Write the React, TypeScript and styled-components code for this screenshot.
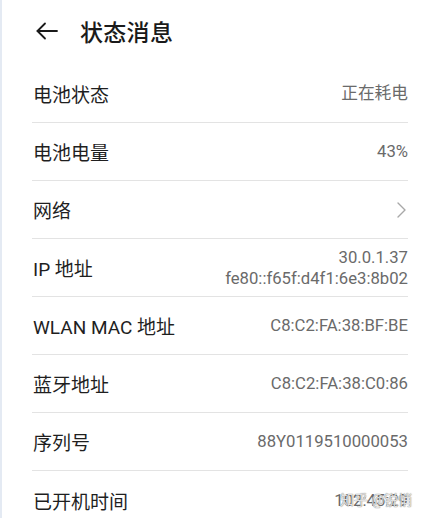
import React from 'react';
import styled, { createGlobalStyle } from 'styled-components';

const GlobalStyle = createGlobalStyle`
	html, body {
		margin: 0;
		padding: 0;
		background: #ffffff;
	}

	body {
		font-family: Roboto, "Noto Sans CJK SC", sans-serif;
		-webkit-font-smoothing: antialiased;
	}
`;

const Screen = styled.div`
	position: relative;
	width: 434px;
	height: 518px;
	overflow: hidden;
	box-sizing: border-box;
	border-left: 2px solid #e4eaf3;
	background: #ffffff;
`;

const Header = styled.header`
	display: flex;
	align-items: center;
	gap: 21px;
	height: 65px;
	padding: 0 0 4px 33px;
	box-sizing: border-box;
`;

const BackButton = styled.button`
	display: flex;
	align-items: center;
	justify-content: center;
	width: 24px;
	height: 24px;
	padding: 0;
	border: 0;
	background: none;
	color: #1a1a1a;
	cursor: pointer;
`;

const Title = styled.h1`
	margin: 0;
	font-size: 23px;
	font-weight: 500;
	color: #1a1a1a;
	letter-spacing: 0.3px;
`;

const List = styled.ul`
	list-style: none;
	margin: 0;
	padding: 0 26px 0 30px;
`;

const Row = styled.li<{ $last?: boolean }>`
	display: flex;
	align-items: center;
	justify-content: space-between;
	height: 58px;
	box-sizing: border-box;
	border-bottom: ${p => (p.$last ? 'none' : '1px solid #e3e3e3')};
	padding: 0 0 0 1px;
`;

const Label = styled.span`
	font-size: 19px;
	color: #1f1f1f;
`;

const Value = styled.span`
	display: flex;
	flex-direction: column;
	align-items: flex-end;
	font-size: 16.7px;
	line-height: 21px;
	color: #6a6a6a;
`;

const Chevron = styled.svg`
	width: 12px;
	height: 18px;
	margin-right: 1px;
`;

const Watermark = styled.span`
	position: absolute;
	right: 22px;
	bottom: 9px;
	font-size: 14px;
	color: rgba(240, 240, 240, 0.9);
	text-shadow: 0 0 1px rgba(110, 110, 110, 0.9), 0 0 1px rgba(110, 110, 110, 0.6);
	pointer-events: none;
`;

type Item = {
	label: string;
	value?: string[];
	link?: boolean;
};

const items: Item[] = [
	{ label: '电池状态', value: ['正在耗电'] },
	{ label: '电池电量', value: ['43%'] },
	{ label: '网络', link: true },
	{ label: 'IP 地址', value: ['30.0.1.37', 'fe80::f65f:d4f1:6e3:8b02'] },
	{ label: 'WLAN MAC 地址', value: ['C8:C2:FA:38:BF:BE'] },
	{ label: '蓝牙地址', value: ['C8:C2:FA:38:C0:86'] },
	{ label: '序列号', value: ['88Y0119510000053'] },
	{ label: '已开机时间', value: ['102:45:29'] },
];

export default function App() {
	return (
		<>
			<GlobalStyle />
			<Screen>
				<Header>
					<BackButton aria-label="返回">
						<svg width="24" height="24" viewBox="0 0 24 24" fill="none" stroke="currentColor" strokeWidth="1.8" strokeLinecap="round" strokeLinejoin="round">
							<path d="M22 12H2.5" />
							<path d="M10 4.5L2.5 12l7.5 7.5" />
						</svg>
					</BackButton>
					<Title>状态消息</Title>
				</Header>
				<List>
					{items.map((item, i) => (
						<Row key={item.label} $last={i === items.length - 1}>
							<Label>{item.label}</Label>
							{item.link ? (
								<Chevron viewBox="0 0 12 18" fill="none" stroke="#a8a8a8" strokeWidth="1.4" strokeLinecap="round" strokeLinejoin="round">
									<path d="M3 2l7 7-7 7" />
								</Chevron>
							) : (
								<Value>
									{item.value?.map(v => (
										<span key={v}>{v}</span>
									))}
								</Value>
							)}
						</Row>
					))}
				</List>
				<Watermark>知乎 @锐悄</Watermark>
			</Screen>
		</>
	);
}
